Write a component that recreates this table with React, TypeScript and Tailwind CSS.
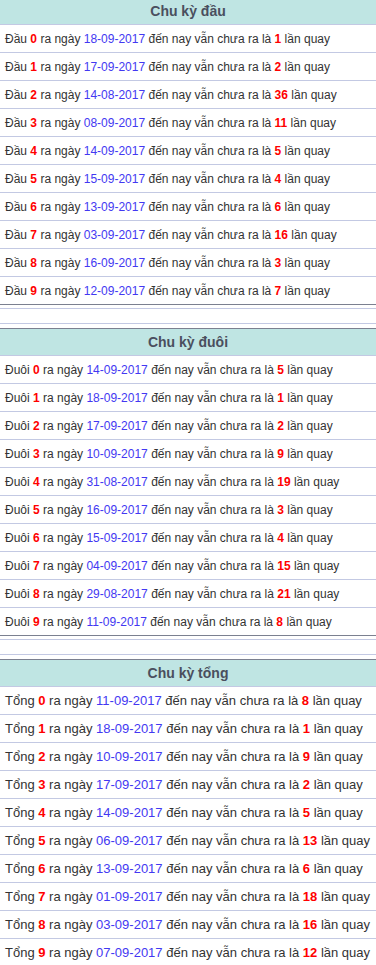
const sections = [
  {
    title: "Chu kỳ đầu",
    label: "Đầu",
    size: "text-[12px]",
    rows: [
      ["18-09-2017", "1"],
      ["17-09-2017", "2"],
      ["14-08-2017", "36"],
      ["08-09-2017", "11"],
      ["14-09-2017", "5"],
      ["15-09-2017", "4"],
      ["13-09-2017", "6"],
      ["03-09-2017", "16"],
      ["16-09-2017", "3"],
      ["12-09-2017", "7"],
    ],
  },
  {
    title: "Chu kỳ đuôi",
    label: "Đuôi",
    size: "text-[12px]",
    rows: [
      ["14-09-2017", "5"],
      ["18-09-2017", "1"],
      ["17-09-2017", "2"],
      ["10-09-2017", "9"],
      ["31-08-2017", "19"],
      ["16-09-2017", "3"],
      ["15-09-2017", "4"],
      ["04-09-2017", "15"],
      ["29-08-2017", "21"],
      ["11-09-2017", "8"],
    ],
  },
  {
    title: "Chu kỳ tổng",
    label: "Tổng",
    size: "text-[13px]",
    rows: [
      ["11-09-2017", "8"],
      ["18-09-2017", "1"],
      ["10-09-2017", "9"],
      ["17-09-2017", "2"],
      ["14-09-2017", "5"],
      ["06-09-2017", "13"],
      ["13-09-2017", "6"],
      ["01-09-2017", "18"],
      ["03-09-2017", "16"],
      ["07-09-2017", "12"],
    ],
  },
];

function Section({
  title,
  label,
  size,
  rows,
}: {
  title: string;
  label: string;
  size: string;
  rows: string[][];
}) {
  return (
    <div className="border-t border-[#7b8090]">
      <div className="h-[27px] bg-[#bfe5e3] border-b border-[#c3c9e3] flex items-center justify-center">
        <span className="text-[14px] font-bold text-[#4a4f5e]">{title}</span>
      </div>
      {rows.map((r, i) => (
        <div
          key={i}
          className={
            "h-[28px] flex items-center pl-[5px] text-[#333] whitespace-pre border-b " +
            size +
            " " +
            (i === rows.length - 1 ? "border-[#7b8090]" : "border-[#c3c9e3]")
          }
        >
          {label + " "}
          <span className="text-[#ff0000] font-bold">{i}</span>
          {" ra ngày "}
          <span className="text-[#4338f2]">{r[0]}</span>
          {" đến nay vẫn chưa ra là "}
          <span className="text-[#ff0000] font-bold">{r[1]}</span>
          {" lần quay"}
        </div>
      ))}
    </div>
  );
}

export default function App() {
  return (
    <div
      className="w-[376px] h-[965px] overflow-hidden bg-white"
      style={{ fontFamily: '"Liberation Sans", Arial, sans-serif' }}
    >
      <div className="-mt-[3px]">
        {sections.map((s, i) => (
          <div key={i}>
            <Section title={s.title} label={s.label} size={s.size} rows={s.rows} />
            {i < sections.length - 1 && (
              <div className="pt-[3px] pb-[4px]">
                <div className="h-[16px] border-y border-[#c3c9e3]" />
              </div>
            )}
          </div>
        ))}
      </div>
    </div>
  );
}
